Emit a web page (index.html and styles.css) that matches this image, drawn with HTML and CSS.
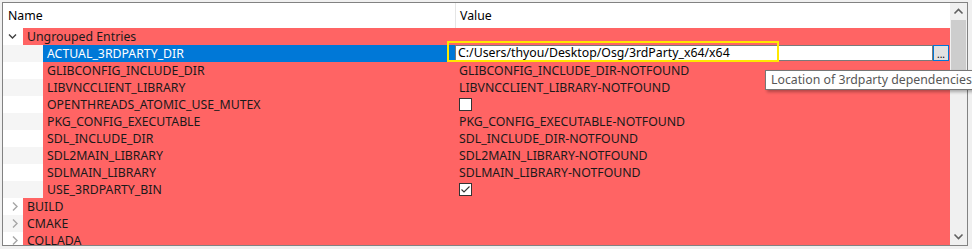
FILE: index.html
```html
<!DOCTYPE html>
<html lang="en">
<head>
    <meta charset="UTF-8">
    <meta name="viewport" content="width=device-width, initial-scale=1.0">
    <title>CMake Cache</title>
    <link rel="stylesheet" href="styles.css">
</head>
<body>
    <div class="frame">
        <div class="view">
            <div class="header">
                <div class="head-name">Name</div>
                <div class="head-value">Value</div>
            </div>

            <div class="rows">
                <div class="row group">
                    <div class="branch">
                        <svg width="20" height="17" viewBox="0 0 20 17"><polyline points="6,6.5 9.5,10 13,6.5" fill="none" stroke="#404040" stroke-width="1.4"/></svg>
                    </div>
                    <div class="item">
                        <div class="name">Ungrouped Entries</div>
                        <div class="value"></div>
                    </div>
                </div>

                <div class="row entry selected">
                    <div class="branch"></div>
                    <div class="item">
                        <div class="name">ACTUAL_3RDPARTY_DIR</div>
                        <div class="value">
                            <div class="editor">
                                <div class="editor-input">C:/Users/thyou/Desktop/Osg/3rdParty_x64/x64</div>
                                <div class="editor-button">...</div>
                            </div>
                        </div>
                    </div>
                </div>

                <div class="row entry">
                    <div class="branch"></div>
                    <div class="item">
                        <div class="name">GLIBCONFIG_INCLUDE_DIR</div>
                        <div class="value">GLIBCONFIG_INCLUDE_DIR-NOTFOUND</div>
                    </div>
                </div>

                <div class="row entry">
                    <div class="branch"></div>
                    <div class="item">
                        <div class="name">LIBVNCCLIENT_LIBRARY</div>
                        <div class="value">LIBVNCCLIENT_LIBRARY-NOTFOUND</div>
                    </div>
                </div>

                <div class="row entry">
                    <div class="branch"></div>
                    <div class="item">
                        <div class="name">OPENTHREADS_ATOMIC_USE_MUTEX</div>
                        <div class="value"><span class="check"></span></div>
                    </div>
                </div>

                <div class="row entry">
                    <div class="branch"></div>
                    <div class="item">
                        <div class="name">PKG_CONFIG_EXECUTABLE</div>
                        <div class="value">PKG_CONFIG_EXECUTABLE-NOTFOUND</div>
                    </div>
                </div>

                <div class="row entry">
                    <div class="branch"></div>
                    <div class="item">
                        <div class="name">SDL_INCLUDE_DIR</div>
                        <div class="value">SDL_INCLUDE_DIR-NOTFOUND</div>
                    </div>
                </div>

                <div class="row entry">
                    <div class="branch"></div>
                    <div class="item">
                        <div class="name">SDL2MAIN_LIBRARY</div>
                        <div class="value">SDL2MAIN_LIBRARY-NOTFOUND</div>
                    </div>
                </div>

                <div class="row entry">
                    <div class="branch"></div>
                    <div class="item">
                        <div class="name">SDLMAIN_LIBRARY</div>
                        <div class="value">SDLMAIN_LIBRARY-NOTFOUND</div>
                    </div>
                </div>

                <div class="row entry">
                    <div class="branch"></div>
                    <div class="item">
                        <div class="name">USE_3RDPARTY_BIN</div>
                        <div class="value">
                            <span class="check">
                                <svg width="11" height="11" viewBox="0 0 11 11"><polyline points="1.5,5.5 4,8 9.5,2.5" fill="none" stroke="#333" stroke-width="1.1"/></svg>
                            </span>
                        </div>
                    </div>
                </div>

                <div class="row group">
                    <div class="branch">
                        <svg width="20" height="17" viewBox="0 0 20 17"><polyline points="10,4.5 14,8.5 10,12.5" fill="none" stroke="#a6a6a6" stroke-width="1.4"/></svg>
                    </div>
                    <div class="item">
                        <div class="name">BUILD</div>
                        <div class="value"></div>
                    </div>
                </div>

                <div class="row group">
                    <div class="branch">
                        <svg width="20" height="17" viewBox="0 0 20 17"><polyline points="10,4.5 14,8.5 10,12.5" fill="none" stroke="#a6a6a6" stroke-width="1.4"/></svg>
                    </div>
                    <div class="item">
                        <div class="name">CMAKE</div>
                        <div class="value"></div>
                    </div>
                </div>

                <div class="row group">
                    <div class="branch">
                        <svg width="20" height="17" viewBox="0 0 20 17"><polyline points="10,4.5 14,8.5 10,12.5" fill="none" stroke="#a6a6a6" stroke-width="1.4"/></svg>
                    </div>
                    <div class="item">
                        <div class="name">COLLADA</div>
                        <div class="value"></div>
                    </div>
                </div>
            </div>
        </div>

        <div class="scrollbar">
            <div class="scroll-arrow">
                <svg width="17" height="17" viewBox="0 0 17 17"><polyline points="4.5,10.5 8.5,6.5 12.5,10.5" fill="none" stroke="#606060" stroke-width="1.6"/></svg>
            </div>
            <div class="scroll-track">
                <div class="scroll-thumb"></div>
            </div>
            <div class="scroll-arrow">
                <svg width="17" height="17" viewBox="0 0 17 17"><polyline points="4.5,6.5 8.5,10.5 12.5,6.5" fill="none" stroke="#606060" stroke-width="1.6"/></svg>
            </div>
        </div>
    </div>

    <!-- highlight drawn over the edited cell -->
    <div class="highlight"></div>

    <div class="tooltip">Location of 3rdparty dependencies</div>
</body>
</html>
```

FILE: styles.css
```css
html, body {
    margin: 0;
    padding: 0;
    overflow: hidden;
}
body {
    width: 972px;
    height: 249px;
    background: #f0f0f0;
    font-family: "Noto Sans", sans-serif;
    font-size: 12.3px;
    color: #000;
    position: relative;
}
.frame {
    margin: 2px 0 0 2px;
    width: 964px;
    height: 242px;
    border: 1px solid #828282;
    background: #fff;
    display: flex;
    overflow: hidden;
}
.view {
    flex: 1;
    overflow: hidden;
}
.header {
    display: flex;
    height: 25px;
    line-height: 25px;
    background: #fff;
}
.head-name {
    width: 447px;
    padding-left: 5px;
}
.head-value {
    flex: 1;
    border-left: 1px solid #e5e5e5;
    padding-left: 4px;
}
.row {
    display: flex;
    height: 17px;
    line-height: 17px;
    white-space: nowrap;
}
.row:nth-child(even) .branch {
    background: #f5f5f5;
}
.branch {
    width: 20px;
    flex-shrink: 0;
}
.branch svg {
    display: block;
}
.entry .branch {
    width: 40px;
}
.item {
    flex: 1;
    display: flex;
    background: #ff6464;
    color: #1a1a1a;
}
.name {
    flex: 1;
    padding-left: 4px;
    overflow: hidden;
}
.value {
    width: 491px;
    padding-left: 4px;
    display: flex;
    align-items: center;
}
.selected .name {
    background: #0078d7;
    color: #fff;
}
.selected .value {
    padding-left: 0;
    width: 495px;
    align-items: flex-start;
}
.editor {
    display: flex;
    height: 16px;
}
.editor-input {
    width: 474px;
    height: 14px;
    line-height: 14px;
    border: 1px solid #7a7a7a;
    background: #fff;
    color: #000;
    padding-left: 2px;
}
.editor-button {
    width: 14px;
    height: 14px;
    border: 1px solid #0078d7;
    background: #e1e1e1;
    font-size: 10px;
    line-height: 16px;
    text-align: center;
    color: #000;
}
.check {
    width: 11px;
    height: 11px;
    border: 1px solid #333;
    background: #fff;
    display: block;
}
.check svg {
    display: block;
}
.scrollbar {
    width: 17px;
    display: flex;
    flex-direction: column;
    background: #f0f0f0;
}
.scroll-arrow {
    height: 17px;
}
.scroll-arrow svg {
    display: block;
}
.scroll-track {
    flex: 1;
}
.scroll-thumb {
    margin: 0 1px;
    height: 56px;
    background: #cdcdcd;
}
.highlight {
    position: absolute;
    left: 447px;
    top: 41px;
    width: 328px;
    height: 17px;
    border: 2px solid #ffe800;
}
.tooltip {
    position: absolute;
    left: 765px;
    top: 70px;
    height: 18px;
    line-height: 18px;
    padding: 0 5px;
    border: 1px solid #767676;
    background: #fff;
    color: #575757;
    white-space: nowrap;
    box-shadow: 2px 2px 3px rgba(0, 0, 0, 0.3);
}
```
